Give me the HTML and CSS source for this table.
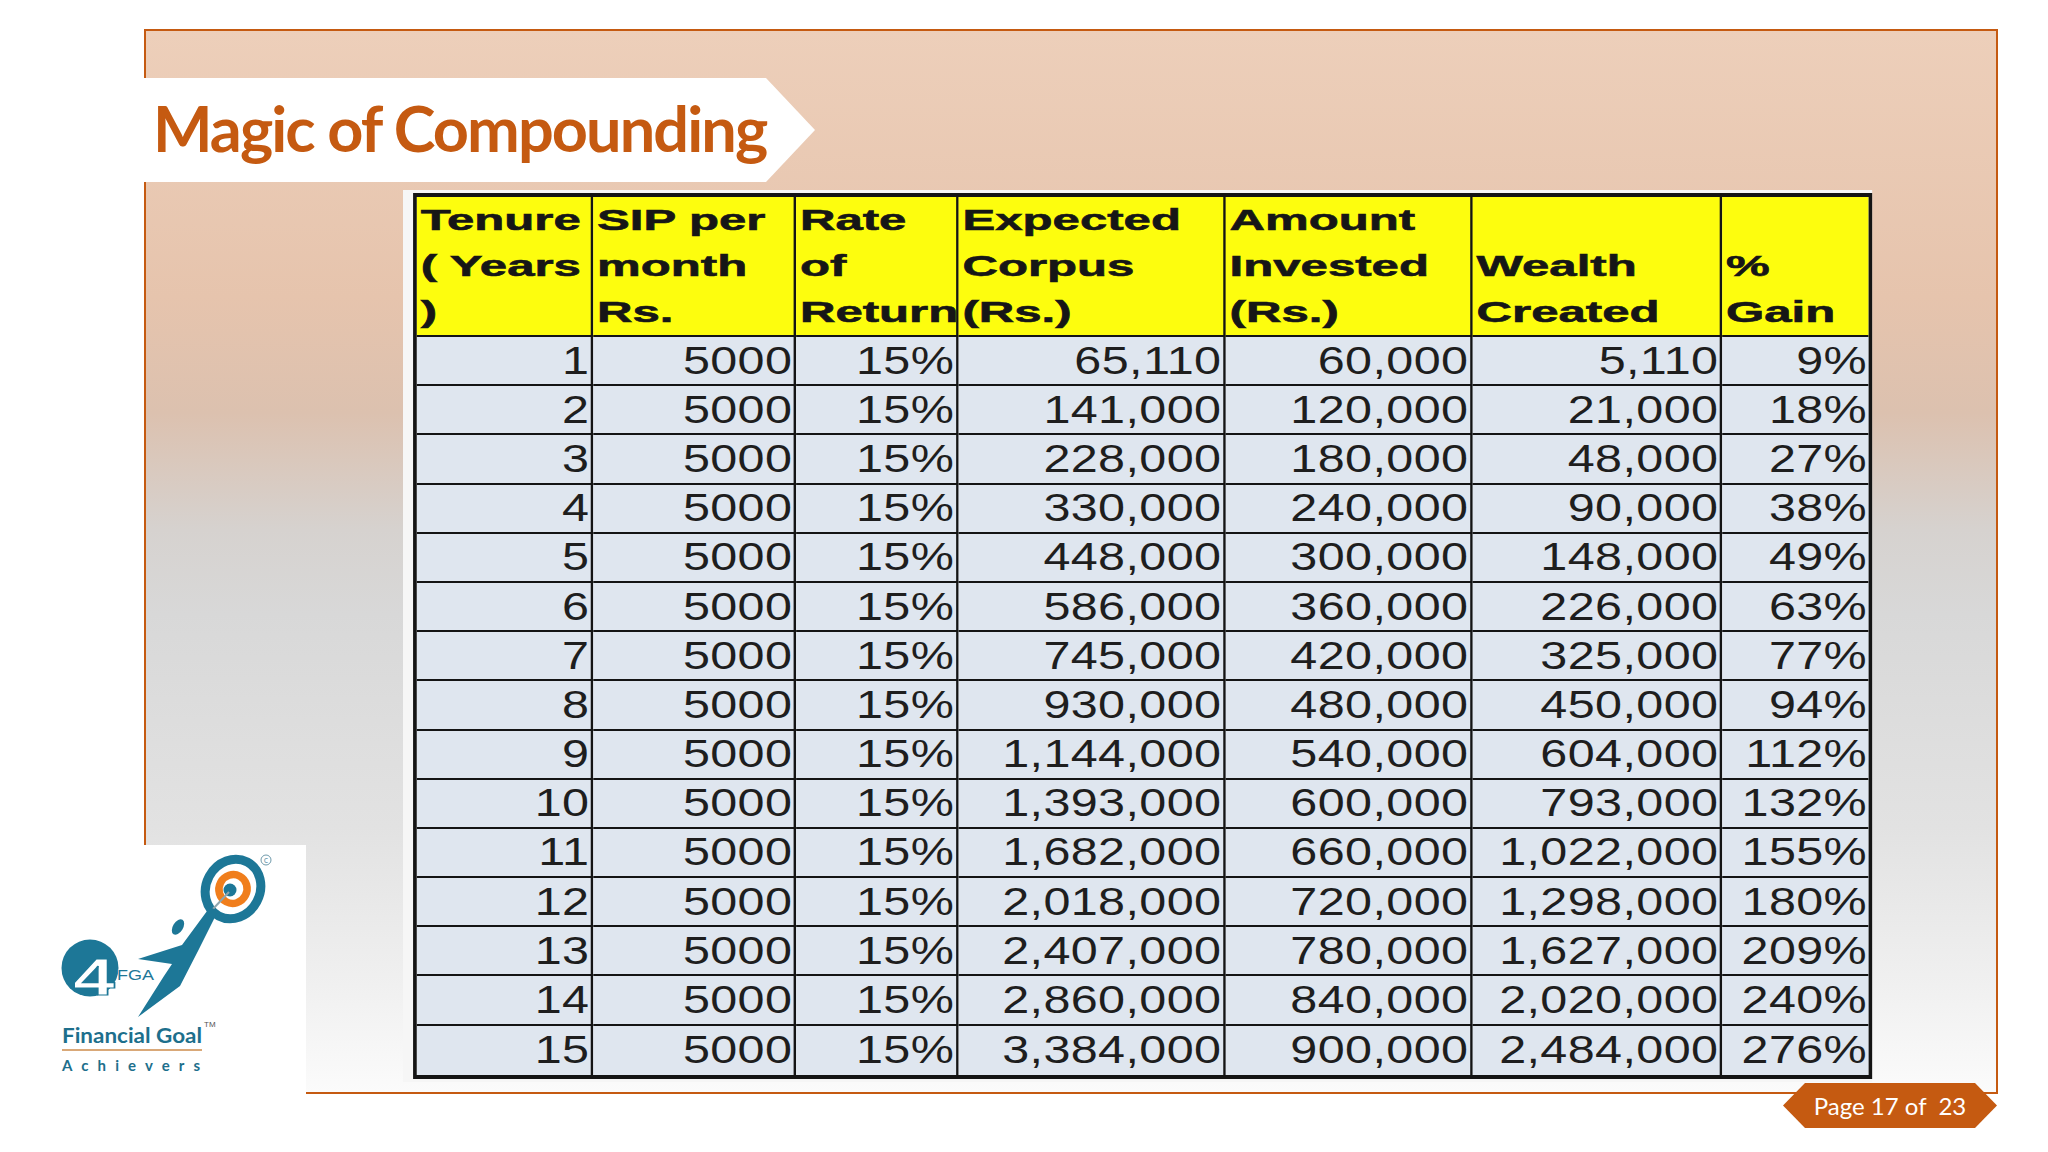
FILE: index.html
```html
<!DOCTYPE html>
<html lang="en">
<head>
<meta charset="utf-8">
<title>Magic of Compounding</title>
<link rel="stylesheet" href="styles.css">
</head>
<body>
<div class="page">
  <section class="frame">
    <div class="banner"><h1>Magic of Compounding</h1></div>
    <div class="table-wrap">
      <table class="sip">
        <colgroup>
          <col class="c1"><col class="c2"><col class="c3"><col class="c4"><col class="c5"><col class="c6"><col class="c7">
        </colgroup>
        <thead>
          <tr>
            <th><span>Tenure<br>( Years<br>)</span></th>
            <th><span>SIP per<br>month<br>Rs.</span></th>
            <th><span>Rate<br>of<br>Return</span></th>
            <th><span>Expected<br>Corpus<br>(Rs.)</span></th>
            <th><span>Amount<br>Invested<br>(Rs.)</span></th>
            <th><span>Wealth<br>Created</span></th>
            <th><span>%<br>Gain</span></th>
          </tr>
        </thead>
        <tbody>
          <tr><td>1</td><td>5000</td><td>15%</td><td>65,110</td><td>60,000</td><td>5,110</td><td>9%</td></tr>
          <tr><td>2</td><td>5000</td><td>15%</td><td>141,000</td><td>120,000</td><td>21,000</td><td>18%</td></tr>
          <tr><td>3</td><td>5000</td><td>15%</td><td>228,000</td><td>180,000</td><td>48,000</td><td>27%</td></tr>
          <tr><td>4</td><td>5000</td><td>15%</td><td>330,000</td><td>240,000</td><td>90,000</td><td>38%</td></tr>
          <tr><td>5</td><td>5000</td><td>15%</td><td>448,000</td><td>300,000</td><td>148,000</td><td>49%</td></tr>
          <tr><td>6</td><td>5000</td><td>15%</td><td>586,000</td><td>360,000</td><td>226,000</td><td>63%</td></tr>
          <tr><td>7</td><td>5000</td><td>15%</td><td>745,000</td><td>420,000</td><td>325,000</td><td>77%</td></tr>
          <tr><td>8</td><td>5000</td><td>15%</td><td>930,000</td><td>480,000</td><td>450,000</td><td>94%</td></tr>
          <tr><td>9</td><td>5000</td><td>15%</td><td>1,144,000</td><td>540,000</td><td>604,000</td><td>112%</td></tr>
          <tr><td>10</td><td>5000</td><td>15%</td><td>1,393,000</td><td>600,000</td><td>793,000</td><td>132%</td></tr>
          <tr><td>11</td><td>5000</td><td>15%</td><td>1,682,000</td><td>660,000</td><td>1,022,000</td><td>155%</td></tr>
          <tr><td>12</td><td>5000</td><td>15%</td><td>2,018,000</td><td>720,000</td><td>1,298,000</td><td>180%</td></tr>
          <tr><td>13</td><td>5000</td><td>15%</td><td>2,407,000</td><td>780,000</td><td>1,627,000</td><td>209%</td></tr>
          <tr><td>14</td><td>5000</td><td>15%</td><td>2,860,000</td><td>840,000</td><td>2,020,000</td><td>240%</td></tr>
          <tr><td>15</td><td>5000</td><td>15%</td><td>3,384,000</td><td>900,000</td><td>2,484,000</td><td>276%</td></tr>
        </tbody>
      </table>
    </div>
  </section>

  <div class="logo">
    <svg width="266" height="250" viewBox="0 0 266 250" xmlns="http://www.w3.org/2000/svg">
      <g transform="translate(193,44) rotate(28)">
        <ellipse rx="27" ry="30.5" fill="none" stroke="#1d7797" stroke-width="9"/>
        <ellipse rx="14" ry="14.5" fill="none" stroke="#f07e1c" stroke-width="7.5"/>
      </g>
      <circle cx="190" cy="45" r="6.5" fill="#1d7797"/>
      <circle cx="226" cy="15" r="5" fill="none" stroke="#6f9aab" stroke-width="1"/>
      <text class="lg-copy" x="226" y="18" text-anchor="middle">c</text>
      <line x1="172" y1="65" x2="189" y2="47" stroke="#8fa5ad" stroke-width="2"/>
      <ellipse cx="138" cy="82" rx="5" ry="8.5" transform="rotate(32 138 82)" fill="#1d7797"/>
      <path d="M98 114 L142 100 L170 62 L178 66 L158 106 L140 141 L98 172 L124 131 L132 119 Z" fill="#1d7797"/>
      <circle cx="50" cy="123" r="28.5" fill="#1d7797"/>
      <text class="lg-four" transform="translate(33 150) scale(1.45 1)">4</text>
      <text class="lg-fga" x="77" y="135" textLength="37" lengthAdjust="spacingAndGlyphs">FGA</text>
      <text class="lg-name" x="22" y="198" textLength="140" lengthAdjust="spacingAndGlyphs">Financial Goal</text>
      <text class="lg-tm" x="164" y="182">TM</text>
      <line x1="22" y1="205" x2="162" y2="205" stroke="#d9a878" stroke-width="2"/>
      <text class="lg-ach" x="22" y="226" textLength="138" lengthAdjust="spacing">Achievers</text>
    </svg>
  </div>

  <div class="badge">Page 17 of  23</div>
</div>
</body>
</html>
```
FILE: styles.css
```css
html, body {
  margin: 0;
  padding: 0;
  background: #ffffff;
}

body {
  font-family: "Liberation Sans", Arial, sans-serif;
}

.page {
  position: relative;
  width: 2048px;
  height: 1152px;
  box-sizing: border-box;
  padding: 29px 0 0 144px;
  overflow: hidden;
}

.frame {
  box-sizing: border-box;
  width: 1854px;
  height: 1065px;
  border: 2px solid #c55a11;
  background: linear-gradient(to bottom,
    #edcfba 0%,
    #e6c4ad 25%,
    #dcc1af 36%,
    #d6d2cf 47%,
    #d8d8d8 55%,
    #e2e2e2 75%,
    #f0f0f0 90%,
    #fbfbfb 100%);
  display: flex;
  flex-direction: column;
  align-items: flex-start;
}

.banner {
  margin: 47px 0 0 -2px;
  width: 671px;
  height: 104px;
  background: #ffffff;
  clip-path: polygon(0 0, 622px 0, 671px 52px, 622px 104px, 0 104px);
}

.banner h1 {
  margin: 0;
  padding-left: 9px;
  font-family: Lato, "Open Sans", sans-serif;
  font-weight: 700;
  font-size: 63px;
  letter-spacing: -1.9px;
  line-height: 100px;
  color: #c55a11;
  white-space: nowrap;
}

.table-wrap {
  margin: 8px 0 0 257px;
  padding: 3px 0 3px 8px;
  background: #f6f6f6;
  transform: scaleX(1.26);
  transform-origin: 0 0;
}

.sip {
  width: 1158px;
  table-layout: fixed;
  border-collapse: separate;
  border-spacing: 0;
  border-style: solid;
  border-color: #141414;
  border-width: 4px 3px;
}

.c1 { width: 140px; }
.c2 { width: 161px; }
.c3 { width: 128.5px; }
.c4 { width: 212px; }
.c5 { width: 196px; }
.c6 { width: 198.4px; }
.c7 { width: 116px; }

.sip thead tr { height: 140px; }
.sip tbody tr { height: 49.2px; }

.sip th {
  background: #fdfd0e;
  text-align: left;
  vertical-align: bottom;
  padding: 0 0 0 3px;
  border-right: 2px solid #141414;
  border-bottom: 2px solid #141414;
  font-family: "Liberation Sans", Arial, sans-serif;
  font-weight: 700;
  font-size: 30px;
  line-height: 46px;
  color: #161616;
  -webkit-text-stroke: 0.6px #161616;
  white-space: nowrap;
  overflow: visible;
}

.sip th span {
  display: inline-block;
  transform: scaleX(1.3);
  transform-origin: 0 50%;
}

.sip td {
  background: #dfe6ef;
  text-align: right;
  vertical-align: middle;
  padding: 0 1px 0 0;
  border-right: 2px solid #141414;
  border-bottom: 2px solid #141414;
  font-size: 38.5px;
  letter-spacing: 0.3px;
  color: #1e1e1e;
  white-space: nowrap;
}

.sip th:last-child,
.sip td:last-child { border-right: 0; }

.sip tbody tr:last-child td { border-bottom: 0; }

.logo {
  position: absolute;
  left: 40px;
  top: 845px;
  width: 266px;
  height: 250px;
  background: #ffffff;
}

.logo svg { display: block; }

.lg-copy {
  font-family: "DejaVu Sans", sans-serif;
  font-size: 8px;
  fill: #6f9aab;
}

.lg-four {
  font-family: "Liberation Sans", Arial, sans-serif;
  font-weight: 700;
  font-size: 52px;
  fill: #ffffff;
  stroke: #1d7797;
  stroke-width: 1.2px;
}

.lg-fga {
  font-family: "Liberation Sans", Arial, sans-serif;
  font-size: 15px;
  fill: #1d7797;
  stroke: #ffffff;
  stroke-width: 0.6px;
  paint-order: stroke;
}

.lg-name {
  font-family: Lato, "Open Sans", sans-serif;
  font-weight: 700;
  font-size: 21px;
  fill: #1d6f8c;
}

.lg-tm {
  font-family: "Liberation Sans", Arial, sans-serif;
  font-size: 8px;
  fill: #555555;
}

.lg-ach {
  font-family: Lato, "Open Sans", sans-serif;
  font-weight: 700;
  font-size: 15px;
  fill: #1d6f8c;
}

.badge {
  position: absolute;
  left: 1783px;
  top: 1083px;
  width: 214px;
  height: 45px;
  background: #c55a11;
  clip-path: polygon(22px 0, 192px 0, 214px 50%, 192px 100%, 22px 100%, 0 50%);
  color: #ffffff;
  font-family: Lato, "Open Sans", sans-serif;
  font-size: 24px;
  line-height: 45px;
  text-align: center;
  white-space: pre;
}
```
